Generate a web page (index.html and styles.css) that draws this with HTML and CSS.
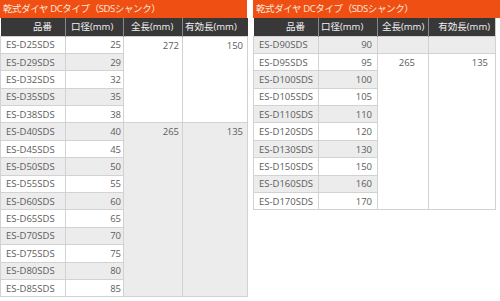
FILE: index.html
```html
<!DOCTYPE html>
<html lang="ja">
<head>
<meta charset="utf-8">
<link rel="stylesheet" href="styles.css">
</head>
<body>
<div class="page">
  <section class="panel panel-left">
    <div class="title">乾式ダイヤ DCタイプ（SDSシャンク）</div>
    <table class="spec spec-left">
      <colgroup><col class="c1"><col class="c2"><col class="c3"><col class="c4"></colgroup>
      <thead>
        <tr><th class="h-no">品番</th><th class="h-dia">口径(mm)</th><th class="h-len">全長(mm)</th><th class="h-eff">有効長(mm)</th></tr>
      </thead>
      <tbody>
        <tr class="w"><td class="name">ES-D25SDS</td><td class="num">25</td><td class="val v-len w" rowspan="5">272</td><td class="val v-eff w" rowspan="5">150</td></tr>
        <tr class="g"><td class="name">ES-D29SDS</td><td class="num">29</td></tr>
        <tr class="w"><td class="name">ES-D32SDS</td><td class="num">32</td></tr>
        <tr class="g"><td class="name">ES-D35SDS</td><td class="num">35</td></tr>
        <tr class="w"><td class="name">ES-D38SDS</td><td class="num">38</td></tr>
        <tr class="g"><td class="name">ES-D40SDS</td><td class="num">40</td><td class="val v-len g" rowspan="10">265</td><td class="val v-eff g" rowspan="10">135</td></tr>
        <tr class="w"><td class="name">ES-D45SDS</td><td class="num">45</td></tr>
        <tr class="g"><td class="name">ES-D50SDS</td><td class="num">50</td></tr>
        <tr class="w"><td class="name">ES-D55SDS</td><td class="num">55</td></tr>
        <tr class="g"><td class="name">ES-D60SDS</td><td class="num">60</td></tr>
        <tr class="w"><td class="name">ES-D65SDS</td><td class="num">65</td></tr>
        <tr class="g"><td class="name">ES-D70SDS</td><td class="num">70</td></tr>
        <tr class="w"><td class="name">ES-D75SDS</td><td class="num">75</td></tr>
        <tr class="g"><td class="name">ES-D80SDS</td><td class="num">80</td></tr>
        <tr class="w"><td class="name">ES-D85SDS</td><td class="num">85</td></tr>
      </tbody>
    </table>
  </section>
  <section class="panel panel-right">
    <div class="title">乾式ダイヤ DCタイプ（SDSシャンク）</div>
    <table class="spec spec-right">
      <colgroup><col class="r1"><col class="r2"><col class="r3"><col class="r4"><col class="r5"></colgroup>
      <thead>
        <tr><th class="h-no">品番</th><th class="h-dia2">口径(mm)</th><th class="h-len2">全長(mm)</th><th class="h-eff2">有効長(mm)</th><th class="h-cut"></th></tr>
      </thead>
      <tbody>
        <tr class="g"><td class="name">ES-D90SDS</td><td class="num num2">90</td><td class="val g"></td><td class="val g"></td><td class="cut"></td></tr>
        <tr class="w"><td class="name">ES-D95SDS</td><td class="num num2">95</td><td class="val v-len2 w" rowspan="9">265</td><td class="val v-eff2 w" rowspan="9">135</td><td class="cut" rowspan="9"></td></tr>
        <tr class="g"><td class="name">ES-D100SDS</td><td class="num num2">100</td></tr>
        <tr class="w"><td class="name">ES-D105SDS</td><td class="num num2">105</td></tr>
        <tr class="g"><td class="name">ES-D110SDS</td><td class="num num2">110</td></tr>
        <tr class="w"><td class="name">ES-D120SDS</td><td class="num num2">120</td></tr>
        <tr class="g"><td class="name">ES-D130SDS</td><td class="num num2">130</td></tr>
        <tr class="w"><td class="name">ES-D150SDS</td><td class="num num2">150</td></tr>
        <tr class="g"><td class="name">ES-D160SDS</td><td class="num num2">160</td></tr>
        <tr class="w"><td class="name">ES-D170SDS</td><td class="num num2">170</td></tr>
      </tbody>
    </table>
  </section>
</div>
</body>
</html>
```
FILE: styles.css
```css
html, body {
  margin: 0;
  padding: 0;
  background: #fff;
}
body {
  font-family: "Open Sans", "Noto Sans CJK JP", sans-serif;
  font-size: 9.5px;
  color: #5c5c5c;
  width: 500px;
  height: 301px;
  overflow: hidden;
}
.page {
  display: flex;
  gap: 6px;
  align-items: flex-start;
}
.panel-left { width: 247px; }
.panel-right { width: 247px; }
.title {
  height: 18px;
  line-height: 18px;
  background: #ef4f12;
  color: #fde9df;
  padding-left: 3px;
  font-size: 9.5px;
  letter-spacing: -0.4px;
  white-space: nowrap;
  overflow: hidden;
}
.spec {
  border-collapse: collapse;
  table-layout: fixed;
}
.spec-left { width: 247px; }
.spec-right { width: 247px; }
.c1 { width: 65px; }
.c2 { width: 58px; }
.c3 { width: 59px; }
.c4 { width: 65px; }
.r1 { width: 65px; }
.r2 { width: 59px; }
.r3 { width: 51px; }
.r4 { width: 67px; }
.r5 { width: 5px; }
thead tr { height: 18px; }
th {
  padding: 0;
  background: #383838;
  color: #f2f2f2;
  font-weight: normal;
  text-align: left;
  white-space: nowrap;
  overflow: hidden;
  border-left: 1px solid #888;
  line-height: 14px;
}
th:first-child { border-left: none; }
.h-no { text-align: right; padding-right: 13px; }
.h-dia { padding-left: 5px; }
.h-len { padding-left: 7px; }
.h-eff { padding-left: 2px; }
.h-dia2 { padding-left: 2px; }
.h-len2 { padding-left: 4px; }
.h-eff2 { text-align: right; padding-right: 5px; }
.h-cut { background: #fff; border-left: 1px solid #ccc; }
tbody tr { height: 17.4px; }
td {
  padding: 0;
  border: 1px solid #d2d2d2;
  white-space: nowrap;
  line-height: 13px;
}
tr.g td { background: #ececec; }
tr.w td { background: #fff; }
td.val { vertical-align: top; text-align: right; padding-top: 2px; }
td.val.g { background: #ececec; }
td.val.w { background: #fff; }
.name { padding-left: 5px; }
.num { text-align: right; padding-right: 2px; }
.num2 { padding-right: 5px; }
.v-len { padding-right: 3px; }
.v-eff { padding-right: 4px; }
.v-len2 { padding-right: 13px; }
.v-eff2 { padding-right: 7px; }
td.cut { background: #fff !important; border: none; border-left: 1px solid #ccc; }
```
